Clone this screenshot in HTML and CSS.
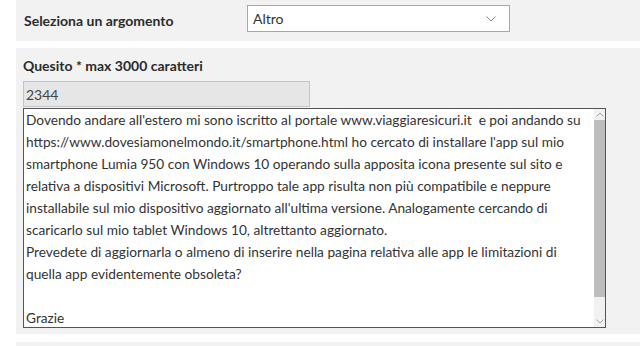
FILE: index.html
```html
<!DOCTYPE html>
<html lang="it">
<head>
<meta charset="utf-8">
<title>Quesito</title>
<link rel="stylesheet" href="styles.css">
</head>
<body>
<div class="panel panel-top">
  <div class="field-label">Seleziona un argomento</div>
  <div class="select">
    <span class="select-value">Altro</span>
    <svg class="chev" width="10" height="6" viewBox="0 0 10 6"><path d="M0.5 0.5 L5 5 L9.5 0.5" fill="none" stroke="#888" stroke-width="1"/></svg>
  </div>
</div>
<div class="panel panel-main">
  <div class="field-label">Quesito * max 3000 caratteri</div>
  <div class="counter">2344</div>
  <div class="textarea">
    <div class="ta-text">Dovendo andare all'estero mi sono iscritto al portale www.viaggiaresicuri.it&nbsp; e poi andando su<br>https://www.dovesiamonelmondo.it/smartphone.html ho cercato di installare l'app sul mio<br>smartphone Lumia 950 con Windows 10 operando sulla apposita icona presente sul sito e<br>relativa a dispositivi Microsoft. Purtroppo tale app risulta non più compatibile e neppure<br>installabile sul mio dispositivo aggiornato all'ultima versione. Analogamente cercando di<br>scaricarlo sul mio tablet Windows 10, altrettanto aggiornato.<br>Prevedete di aggiornarla o almeno di inserire nella pagina relativa alle app le limitazioni di<br>quella app evidentemente obsoleta?<br><br>Grazie</div>
    <div class="scrollbar">
      <div class="sb-btn"><svg width="8" height="5" viewBox="0 0 8 5"><path d="M0.5 4.5 L4 1 L7.5 4.5" fill="none" stroke="#a3a3a3" stroke-width="1"/></svg></div>
      <div class="sb-track"><div class="sb-thumb"></div></div>
      <div class="sb-btn sb-btn-down"><svg width="8" height="5" viewBox="0 0 8 5"><path d="M0.5 0.5 L4 4 L7.5 0.5" fill="none" stroke="#a3a3a3" stroke-width="1"/></svg></div>
    </div>
  </div>
</div>
<div class="panel panel-bottom"></div>
</body>
</html>
```
FILE: styles.css
```css
html, body {
  margin: 0;
  padding: 0;
  background: #ffffff;
}
body {
  font-family: Lato, "Open Sans", sans-serif;
  color: #333333;
  width: 640px;
  height: 346px;
  overflow: hidden;
}
.panel {
  background: #f2f2f2;
  margin-left: 16px;
}
.panel-top {
  height: 41px;
  display: grid;
  grid-template-columns: 223px 263px;
  align-items: center;
  padding-left: 8px;
  box-sizing: border-box;
}
.field-label {
  font-weight: 700;
  font-size: 14px;
  color: #2b2b2b;
}
.select {
  height: 27px;
  box-sizing: border-box;
  background: #ffffff;
  border: 1px solid #a7a7a7;
  display: flex;
  align-items: center;
  justify-content: space-between;
  padding: 0 13px 0 5px;
  margin-bottom: 4px;
}
.select-value {
  font-size: 14px;
  color: #333;
}
.chev { display: block; }
.panel-main {
  margin-top: 7px;
  padding: 9px 0 6px 7px;
}
.panel-main .field-label {
  line-height: 18px;
  margin-bottom: 6px;
}
.counter {
  width: 287px;
  height: 26px;
  box-sizing: border-box;
  background: #e6e6e6;
  border: 1px solid #c4c4c4;
  font-size: 14px;
  color: #444;
  padding-left: 2px;
  display: flex;
  align-items: center;
  margin-bottom: 1px;
}
.textarea {
  width: 583px;
  height: 220px;
  box-sizing: border-box;
  background: #ffffff;
  border: 1px solid #555555;
  display: flex;
}
.ta-text {
  flex: 1;
  font-size: 13.7px;
  line-height: 22px;
  color: #333;
  padding: 0 0 0 2px;
  white-space: nowrap;
  overflow: hidden;
}
.scrollbar {
  width: 11px;
  background: #f1f1f1;
  display: flex;
  flex-direction: column;
}
.sb-btn {
  height: 11px;
  display: flex;
  align-items: center;
  justify-content: center;
}
.sb-track {
  flex: 1;
  display: flex;
  flex-direction: column;
}
.sb-thumb {
  height: 177px;
  background: #bdbdbd;
}
.panel-bottom {
  margin-top: 8px;
  height: 10px;
}
```
